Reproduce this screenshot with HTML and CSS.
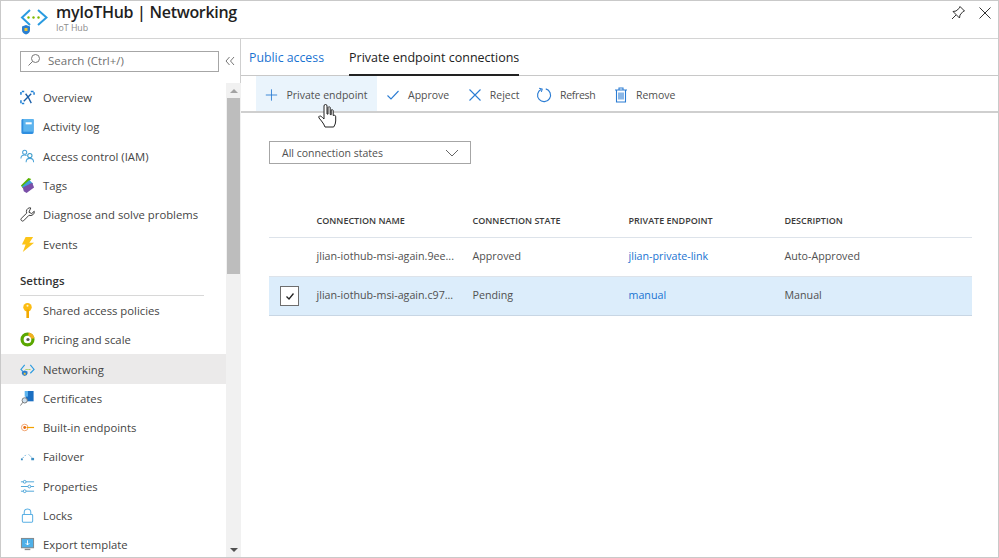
FILE: index.html
```html
<!DOCTYPE html>
<html lang="en">
<head>
<meta charset="utf-8">
<title>myIoTHub | Networking</title>
<link rel="stylesheet" href="styles.css">
</head>
<body>
<div class="frame">
  <header class="header">
    <svg class="logo" viewBox="0 0 28 28" width="28" height="28">
      <path d="M10 1 2 8.500l8 7.500" fill="none" stroke="#2a9be0" stroke-width="2"/>
      <path d="M18 1l8.500 7.500L18 16" fill="none" stroke="#2a9be0" stroke-width="2"/>
      <circle cx="8.500" cy="8.500" r="1.200" fill="#7fba00"/><circle cx="13.500" cy="8.500" r="1.200" fill="#7fba00"/><circle cx="18.500" cy="8.500" r="1.200" fill="#7fba00"/>
      <path d="M2 17.500 6 16l4 1.500v3.500q0 3-4 4.500-4-1.500-4-4.500z" fill="#2a7fd0"/>
      <rect x="4.500" y="19" width="3" height="3" fill="#f4c430"/>
    </svg>
    <div class="titles">
      <h1 class="title">myIoTHub | Networking</h1>
      <div class="subtitle">IoT Hub</div>
    </div>
    <div class="window-actions">
      <svg viewBox="0 0 16 16" width="16" height="16"><path d="M10 1.500 14.500 6 13 6.500 10 10l-.5 3L3 6.500 6 6l3.500-3zM6 10l-4 4" fill="none" stroke="#333" stroke-width="1"/></svg>
      <svg viewBox="0 0 14 14" width="14" height="14"><path d="M1.500 1.500l11 11M12.500 1.500l-11 11" fill="none" stroke="#333" stroke-width="1"/></svg>
    </div>
  </header>
  <div class="body">
    <aside class="sidebar">
      <div class="search-row">
        <div class="search">
          <svg viewBox="0 0 14 14" width="14" height="14"><circle cx="8.500" cy="5.500" r="4" fill="none" stroke="#777"/><path d="M5.500 8.500l-4 4" stroke="#777" fill="none"/></svg>
          <span>Search (Ctrl+/)</span>
        </div>
        <svg class="collapse" viewBox="0 0 10 10" width="10" height="10"><path d="M4.500 1 1 5l3.500 4M9 1 5.500 5 9 9" fill="none" stroke="#777"/></svg>
      </div>
      <div class="side-main">
        <nav class="menu">
          <a class="item"><svg class="ic" viewBox="0 0 16 16"><path d="M1 5V1.500h3.500M11.500 1.500H15V5M1 11v3.500h3.500" fill="none" stroke="#1b7fd6" stroke-width="1.600" stroke-dasharray="3 1.500"/><path d="M4 12 12 4M6 4l3 4 3 6" fill="none" stroke="#1b5fa8" stroke-width="1.500"/></svg>Overview</a>
          <a class="item"><svg class="ic" viewBox="0 0 16 16"><rect x="1.500" y="0" width="13" height="16" rx="1.500" fill="#2f8fe0"/><rect x="3.500" y="0" width="11" height="13.500" fill="#5db4ee"/><rect x="6" y="3.500" width="6.500" height="2.200" fill="#fff"/></svg>Activity log</a>
          <a class="item"><svg class="ic" viewBox="0 0 16 16" fill="none" stroke="#4aa3d8" stroke-width="1.100"><circle cx="5" cy="3.500" r="2.200"/><path d="M1 10q0-3.500 4-3.500 1.500 0 2 .5"/><circle cx="10.500" cy="7" r="2.300" stroke="#3b9ac8"/><path d="M6.500 14q0-4 4-4t4 4"/></svg>Access control (IAM)</a>
          <a class="item"><svg class="ic" viewBox="0 0 16 16"><path d="M1 8 9 0l3 1-9 10z" fill="#59b300"/><path d="M2 9l8-7 4 4-8 7z" fill="#3e9fd8"/><path d="M3 10l10-5 2 5-8 6-3-2z" fill="#7a4fa8"/></svg>Tags</a>
          <a class="item"><svg class="ic" viewBox="0 0 16 16"><path d="M10.500 .8a4 4 0 0 0-3.300 5.700L1.300 12.200a1.800 1.800 0 0 0 2.500 2.500l5.800-5.900a4 4 0 0 0 5.600-4.300L12.500 7 9.500 5.500 11.500 1z" fill="none" stroke="#333" stroke-width="1"/></svg>Diagnose and solve problems</a>
          <a class="item"><svg class="ic" viewBox="0 0 16 16"><path d="M6 0h8l-4 6h5L3 16l3-8H2z" fill="#fcc419"/></svg>Events</a>
          <div class="section">Settings</div>
          <a class="item"><svg class="ic" viewBox="0 0 16 16"><circle cx="8" cy="4.500" r="4.500" fill="#fcbc12"/><rect x="6.800" y="7" width="2.800" height="9" fill="#f2a900"/><circle cx="8" cy="3" r="1.100" fill="#fff6d0"/></svg>Shared access policies</a>
          <a class="item"><svg class="ic" viewBox="0 0 16 16"><circle cx="8" cy="8" r="5.800" fill="#fff" stroke="#5aa700" stroke-width="3.400"/><path d="M9 2.300a5.800 5.800 0 0 1 4.800 4.700" fill="none" stroke="#f2b01e" stroke-width="3.400"/><circle cx="8.500" cy="8" r="1.700" fill="#555"/></svg>Pricing and scale</a>
          <a class="item active"><svg class="ic" viewBox="0 0 16 16"><path d="M5 3 1 8l2 2M11 3l4 5-4 4" fill="none" stroke="#2a9be0" stroke-width="1.200"/><path d="M6 8h5" stroke="#7fba00" stroke-dasharray="1 1" fill="none"/><path d="M2 10l3-1 3 1v2q0 2-3 3-3-1-3-3z" fill="#2a7fd0"/><rect x="4" y="11.500" width="2" height="2" fill="#f4c430"/></svg>Networking</a>
          <a class="item"><svg class="ic" viewBox="0 0 16 16"><path d="M6 0h8.500v11H6z" fill="#1b6fc2"/><path d="M5 0h3.500v6H5z" fill="#5db4ee"/><circle cx="5" cy="10" r="2.800" fill="#cfe0ee" stroke="#777"/><path d="M3 12l-2.500 3.500" stroke="#777" fill="none"/></svg>Certificates</a>
          <a class="item"><svg class="ic" viewBox="0 0 16 16"><circle cx="5" cy="8" r="3.500" fill="none" stroke="#f0a06a"/><circle cx="5" cy="8" r="1.500" fill="#e86a10"/><path d="M7 8h8" stroke="#f2a100" stroke-width="1.300"/></svg>Built-in endpoints</a>
          <a class="item"><svg class="ic" viewBox="0 0 16 16"><path d="M3 9.500l4-4" stroke="#59a6d6" stroke-dasharray="1.500 1.500" fill="none"/><path d="M9 5.500l4 4" stroke="#9fc7e0" fill="none"/><rect x="1" y="10" width="2" height="2" fill="#3d8fc4"/><rect x="12" y="9.500" width="3" height="2.500" fill="#3d8fc4"/></svg>Failover</a>
          <a class="item"><svg class="ic" viewBox="0 0 16 16" fill="none" stroke="#4aa3d8"><path d="M1 3h14M1 8h14M1 13h14"/><circle cx="5" cy="3" r="1.500" fill="#fff"/><circle cx="10" cy="8" r="1.500" fill="#fff"/><circle cx="5" cy="13" r="1.500" fill="#fff"/></svg>Properties</a>
          <a class="item"><svg class="ic" viewBox="0 0 16 16" fill="none" stroke="#5ab0e4" stroke-width="1.100"><rect x="2.500" y="7" width="11" height="8.200" rx="1"/><path d="M4.500 7V4.500a3.500 3.500 0 0 1 7 0V7"/></svg>Locks</a>
          <a class="item"><svg class="ic" viewBox="0 0 16 16"><rect x="1" y="1" width="14" height="11" fill="#888"/><rect x="2" y="2" width="12" height="9" fill="#4fb0e8"/><path d="M8 3.500v5M6 6.500l2 2 2-2" stroke="#fff" fill="none"/><rect x="5" y="12.500" width="6" height="1.500" fill="#888"/></svg>Export template</a>
        </nav>
        <div class="scrollbar">
          <div class="arrow up"></div>
          <div class="thumb"></div>
          <div class="track"></div>
          <div class="arrow down"></div>
        </div>
      </div>
    </aside>
    <main class="content">
      <div class="tabs">
        <a class="tab link">Public access</a>
        <a class="tab current">Private endpoint connections</a>
      </div>
      <div class="toolbar">
        <button class="tool hover"><svg viewBox="0 0 16 16" width="16" height="16"><path d="M8 1v14M1 8h14" stroke="#2b7cd3" fill="none" stroke-width="1.100"/></svg>Private endpoint</button>
        <button class="tool"><svg viewBox="0 0 14 14" width="14" height="14"><path d="M1.500 7.500 5 11l7.500-8" stroke="#2b7cd3" fill="none" stroke-width="1.100"/></svg>Approve</button>
        <button class="tool"><svg viewBox="0 0 14 14" width="14" height="14"><path d="M1.500 1.500l11 11M12.500 1.500l-11 11" stroke="#2b7cd3" fill="none" stroke-width="1.100"/></svg>Reject</button>
        <button class="tool refresh"><svg viewBox="0 0 18 18" width="16" height="16"><path d="M6 2.500a7.300 7.300 0 1 0 5-.4" stroke="#2b7cd3" fill="none" stroke-width="1.300"/><path d="M3.500 1.500 7 2.300 6 5.500" stroke="#2b7cd3" fill="none" stroke-width="1.200"/></svg>Refresh</button>
        <button class="tool"><svg viewBox="0 0 14 16" width="14" height="16"><path d="M1 3h12M5 3V1h4v2M2.500 3v12h9V3M5 5.500v7M7 5.500v7M9 5.500v7" stroke="#2b7cd3" fill="none" stroke-width="1.100"/></svg>Remove</button>
        <svg class="cursor" viewBox="0 0 20 28" width="20" height="28"><path d="M6 15V3a1.500 1.500 0 0 1 3 0v8l1 .1V4.500a1.200 1.200 0 0 1 2.200 0v7l1 .3V7a1.200 1.200 0 0 1 2 .5v5l1-.2c1-.2 1.500.5 1.500 1.700v4q0 3-2 6H7q-1-3-3.500-6L1 15q-.7-1.500.5-2c1-.3 2 .5 4.500 3z" fill="#fff" stroke="#222" stroke-width="1"/></svg>
      </div>
      <div class="panel">
        <div class="dropdown">
          <span>All connection states</span>
          <svg viewBox="0 0 14 8" width="14" height="8"><path d="M1 1l6 6 6-6" fill="none" stroke="#666"/></svg>
        </div>
        <div class="table">
          <div class="row head"><div></div><div>CONNECTION NAME</div><div>CONNECTION STATE</div><div>PRIVATE ENDPOINT</div><div>DESCRIPTION</div></div>
          <div class="row"><div></div><div>jlian-iothub-msi-again.9ee...</div><div>Approved</div><div class="blue">jlian-private-link</div><div>Auto-Approved</div></div>
          <div class="row selected"><div><span class="check"><svg viewBox="0 0 10 10" width="10" height="10"><path d="M1.500 5.500 4 8l4.500-5.500" fill="none" stroke="#222" stroke-width="1.300"/></svg></span></div><div>jlian-iothub-msi-again.c97...</div><div>Pending</div><div class="blue">manual</div><div>Manual</div></div>
        </div>
      </div>
    </main>
  </div>
</div>
</body>
</html>
```
FILE: styles.css
```css
* { box-sizing: border-box; }
html, body { margin: 0; height: 100%; background: #fff; overflow: hidden; }
body { font-family: "Open Sans", "Noto Sans", sans-serif; font-size: 11.3px; color: #505050; }
.frame { width: 999px; height: 558px; border: 1px solid #c9c9c9; display: flex; flex-direction: column; overflow: hidden; }
.header { height: 38px; flex: none; display: flex; align-items: flex-start; padding: 8px 6px 0 19px; border-bottom: 1px solid #d4d4d4; }
.logo { flex: none; margin-right: 8px; }
.titles { flex: 1; margin-top: -9px; }
.title { margin: 0; font-size: 16px; font-weight: 600; letter-spacing: -.3px; color: #1f1f1f; line-height: 24px; }
.subtitle { font-size: 8.800px; color: #8a8a8a; line-height: 10px; margin-top: -1px; }
.window-actions { display: flex; gap: 12px; align-items: center; margin-top: -4px; }
.body { flex: 1; display: flex; min-height: 0; }
.sidebar { width: 240px; flex: none; border-right: 1px solid #cfcfcf; display: flex; flex-direction: column; min-height: 0; }
.search-row { height: 44px; flex: none; display: flex; align-items: center; padding: 0 0 0 19px; }
.search { width: 199px; height: 21px; border: 1px solid #a6a6a6; display: flex; align-items: center; gap: 7px; padding: 0 0 2px 6px; color: #707070; font-size: 11.500px; }
.collapse { margin-left: 6px; }
.side-main { flex: 1; display: flex; min-height: 0; }
.menu { width: 225px; flex: none; display: flex; flex-direction: column; overflow: hidden; }
.item { height: 29.300px; flex: none; display: flex; align-items: center; gap: 8px; padding-left: 19px; color: #454545; font-size: 11.300px; }
.item.active { background: #ebeaea; }
.ic { width: 15px; height: 15px; flex: none; }
.section { flex: none; height: 30px; margin: 7px 22px 0 19px; padding-top: 7px; font-weight: 600; font-size: 11.500px; color: #333; line-height: 16px; border-bottom: 1px solid #d8d8d8; }
.scrollbar { width: 15px; flex: none; display: flex; flex-direction: column; background: #f1f1f1; }
.arrow { height: 15px; flex: none; display: flex; align-items: center; justify-content: center; }
.arrow::before { content: ""; border-left: 4px solid transparent; border-right: 4px solid transparent; }
.arrow.up::before { border-bottom: 4px solid #a3a3a3; }
.arrow.down::before { border-top: 4px solid #505050; }
.thumb { height: 176px; flex: none; background: #bdbdbd; margin: 0 1px; }
.track { flex: 1; }
.content { flex: 1; display: flex; flex-direction: column; min-width: 0; }
.tabs { height: 37px; flex: none; display: flex; align-items: stretch; gap: 26px; padding-left: 8px; border-bottom: 1px solid #c8c8c8; }
.tab { display: flex; align-items: center; padding-top: 1px; }
.tab.link { color: #1a73d1; font-size: 12.300px; }
.tab.current { color: #222; font-size: 12.500px; font-weight: 500; border-bottom: 2px solid #222; margin: 0 0 -1px -1px; padding-top: 2px; }
.toolbar { height: 37px; flex: none; display: flex; align-items: stretch; padding-left: 15px; border-bottom: 2px solid #cfcfcf; position: relative; }
.tool { border: 0; background: none; font: inherit; font-size: 10.500px; color: #505050; display: flex; align-items: center; gap: 8px; padding: 2px 9.500px 0 9px; white-space: nowrap; }
.tool.hover { background: #eaf4fc; width: 121px; gap: 8.500px; }
.tool.refresh { margin-left: -2px; letter-spacing: -.3px; }
.cursor { position: absolute; left: 77px; top: 27px; }
.panel { flex: 1; padding: 28px 26px 0 28px; }
.dropdown { width: 202px; height: 23px; border: 1px solid #a6a6a6; display: flex; align-items: center; justify-content: space-between; padding: 0 11px 0 12px; font-size: 10.500px; color: #505050; }
.table { margin-top: 39px; display: flex; flex-direction: column; }
.row { display: grid; grid-template-columns: 47.500px 156px 156px 156px 1fr; align-items: center; height: 39px; padding-bottom: 3px; border-bottom: 1px solid #dde3ea; font-size: 10.700px; color: #505050; }
.row.head { height: 35px; padding-bottom: 0; font-size: 9px; font-weight: 600; color: #3a3a3a; }
.row.selected { background: #dcedfb; border-bottom-color: #c8d6e4; }
.blue { color: #1a73d1; }
.check { display: flex; width: 19px; height: 20px; border: 1px solid #6e6e6e; background: #fff; margin: 3px 0 0 11px; align-items: center; justify-content: center; }
```
